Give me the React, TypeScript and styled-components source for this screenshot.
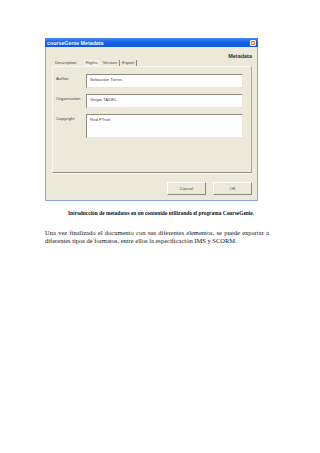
import styled, { createGlobalStyle } from 'styled-components';

const GlobalStyle = createGlobalStyle`
  html, body {
    margin: 0;
    padding: 0;
    background: #ffffff;
  }
`;

const tabs = ['Description', 'Rights', 'Version', 'Export'];

const fields = [
  { label: 'Author', value: 'Sebastián Torres', tall: false },
  { label: 'Organisation', value: 'Grupo TADEL', tall: false },
  { label: 'Copyright', value: 'Red FTnet', tall: true },
];

function App() {
  return (
    <Page>
      <GlobalStyle />
      <Window>
        <TitleBar>
          <Title>courseGenie Metadata</Title>
          <CloseButton>×</CloseButton>
        </TitleBar>
        <Body>
          <Heading>Metadata</Heading>
          <TabStrip>
            {tabs.map((t) => (
              <Tab key={t} active={t === 'Rights'}>
                {t}
              </Tab>
            ))}
          </TabStrip>
          <Panel>
            {fields.map((f) => (
              <FieldRow key={f.label}>
                <Label>{f.label}</Label>
                <TextBox tall={f.tall}>{f.value}</TextBox>
              </FieldRow>
            ))}
          </Panel>
          <Buttons>
            <Button>Cancel</Button>
            <Button>OK</Button>
          </Buttons>
        </Body>
      </Window>
      <Caption>Introducción de metadatos en un contenido utilizando el programa CourseGenie.</Caption>
      <Paragraph>
        Una vez finalizado el documento con sus diferentes elementos, se puede exportar a
        diferentes tipos de formatos, entre ellos la especificación IMS y SCORM.
      </Paragraph>
    </Page>
  );
}

const Page = styled.div`
  width: 320px;
  height: 453px;
  box-sizing: border-box;
  padding-top: 38px;
  overflow: hidden;
  background: #ffffff;
`;

const Window = styled.div`
  margin-left: 45px;
  width: 213px;
  height: 163px;
  box-sizing: border-box;
  display: flex;
  flex-direction: column;
  border: 1px solid #8aa6e2;
  border-top: none;
  background: #ece9d8;
`;

const TitleBar = styled.div`
  height: 9px;
  margin: 0 -1px;
  display: flex;
  align-items: center;
  justify-content: space-between;
  padding: 0 2px;
  background: linear-gradient(180deg, #4a8af2 0%, #1763e8 45%, #0f5ad9 100%);
`;

const Title = styled.span`
  font-family: 'Liberation Sans', Arial, sans-serif;
  font-weight: 700;
  font-size: 5.3px;
  color: #f4f7ff;
`;

const CloseButton = styled.span`
  width: 6px;
  height: 6px;
  border-radius: 1px;
  background: #e2683f;
  border: 0.5px solid #ffffff;
  box-sizing: border-box;
  color: #ffffff;
  font-family: 'Liberation Sans', Arial, sans-serif;
  font-size: 6px;
  line-height: 5px;
  text-align: center;
  font-weight: 700;
`;

const Body = styled.div`
  flex: 1;
  display: flex;
  flex-direction: column;
  padding: 0 5px 5px 6px;
`;

const Heading = styled.div`
  height: 13px;
  display: flex;
  align-items: flex-end;
  justify-content: flex-end;
  font-family: 'Liberation Sans', Arial, sans-serif;
  font-weight: 700;
  font-size: 5.5px;
  line-height: 7px;
  color: #333333;
`;

const TabStrip = styled.div`
  height: 6px;
  display: flex;
  align-items: flex-end;
  padding-left: 1px;
`;

const Tab = styled.span<{ active: boolean }>`
  font-family: 'Liberation Sans', Arial, sans-serif;
  font-size: 4.3px;
  line-height: 6px;
  color: #444444;
  padding: 0 2px;
  margin-right: ${({ active }) => (active ? '1px' : '0')};
  border-right: ${({ active }) => (active ? 'none' : '0.6px solid #8c8a80')};
  background: ${({ active }) => (active ? '#f4f2e8' : 'transparent')};
  &:first-child {
    border-right: none;
    margin-right: 5px;
  }
`;

const Panel = styled.div`
  height: 107px;
  box-sizing: border-box;
  display: flex;
  flex-direction: column;
  gap: 6px;
  padding: 7px 8px 0 3px;
  border-left: 1px solid #f8f7f0;
  border-top: 1px solid #f8f7f0;
  border-right: 1px solid #aca899;
  border-bottom: 1px solid #8e8b7c;
  box-shadow: 0 1px 0 #ffffff;
`;

const FieldRow = styled.div`
  display: flex;
  align-items: flex-start;
`;

const Label = styled.span`
  width: 30px;
  padding-top: 2px;
  font-family: 'Liberation Sans', Arial, sans-serif;
  font-size: 4.3px;
  line-height: 6px;
  color: #444444;
`;

const TextBox = styled.div<{ tall: boolean }>`
  flex: 1;
  height: ${({ tall }) => (tall ? '24px' : '14px')};
  box-sizing: border-box;
  padding: 2px 3px;
  background: #ffffff;
  border-top: 1px solid #8e8b7c;
  border-left: 1px solid #8e8b7c;
  border-right: 1px solid #e8e6dc;
  border-bottom: 1px solid #e8e6dc;
  font-family: 'Liberation Sans', Arial, sans-serif;
  font-size: 4.3px;
  line-height: 6px;
  color: #444444;
`;

const Buttons = styled.div`
  display: flex;
  justify-content: flex-end;
  gap: 7px;
  margin-top: 9px;
`;

const Button = styled.div`
  width: 39px;
  height: 13px;
  box-sizing: border-box;
  display: flex;
  align-items: center;
  justify-content: center;
  background: #ece9d8;
  border-top: 1px solid #ffffff;
  border-left: 1px solid #ffffff;
  border-right: 1px solid #8e8b7c;
  border-bottom: 1px solid #8e8b7c;
  font-family: 'Liberation Sans', Arial, sans-serif;
  font-size: 4.3px;
  color: #444444;
`;

const Caption = styled.p`
  margin: 9px 0 0;
  text-align: center;
  padding-left: 2px;
  font-family: 'Liberation Serif', 'Times New Roman', serif;
  font-weight: 700;
  font-size: 5.4px;
  line-height: 7px;
  color: #111111;
`;

const Paragraph = styled.p`
  margin: 12px 0 0 45px;
  width: 224px;
  text-align: justify;
  font-family: 'Liberation Serif', 'Times New Roman', serif;
  font-size: 6.5px;
  line-height: 8px;
  color: #111111;
`;

export default App;
